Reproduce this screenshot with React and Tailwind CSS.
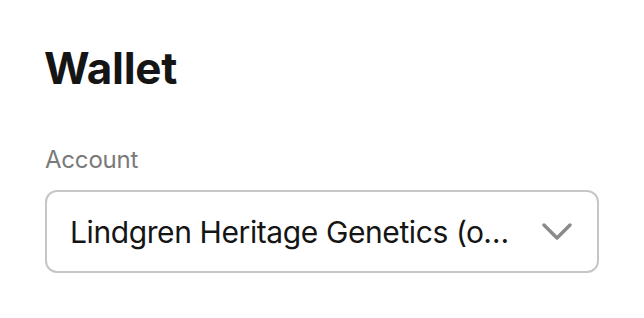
export default function App() {
  return (
    <div className="min-h-[318px] w-[644px] bg-white px-[45px] pt-[40px] font-['Inter',sans-serif]">
      <h1 className="-ml-[1px] text-[44px] font-bold leading-[56px] tracking-[-0.3px] text-[#151515]">Wallet</h1>

      <label className="mt-[49px] block text-[24px] leading-[30px] tracking-[-0.2px] text-[#7a7a7a]">Account</label>

      <button className="mt-[15px] flex h-[83px] w-[554px] items-center justify-between rounded-[12px] border-2 border-[#c4c6c8] bg-white pl-[23px] pr-[25px] text-left">
        <span className="truncate text-[30px] leading-[40px] tracking-[-0.4px] text-[#151515]">
          Lindgren Heritage Genetics (owner)
        </span>
        <svg
          viewBox="0 0 30 17"
          className="ml-[14px] h-[17px] w-[30px] shrink-0"
          fill="none"
          stroke="#8a8a8a"
          strokeWidth="3.4"
          strokeLinecap="round"
          strokeLinejoin="round"
        >
          <path d="M2 2l13 13L28 2" />
        </svg>
      </button>
    </div>
  )
}
